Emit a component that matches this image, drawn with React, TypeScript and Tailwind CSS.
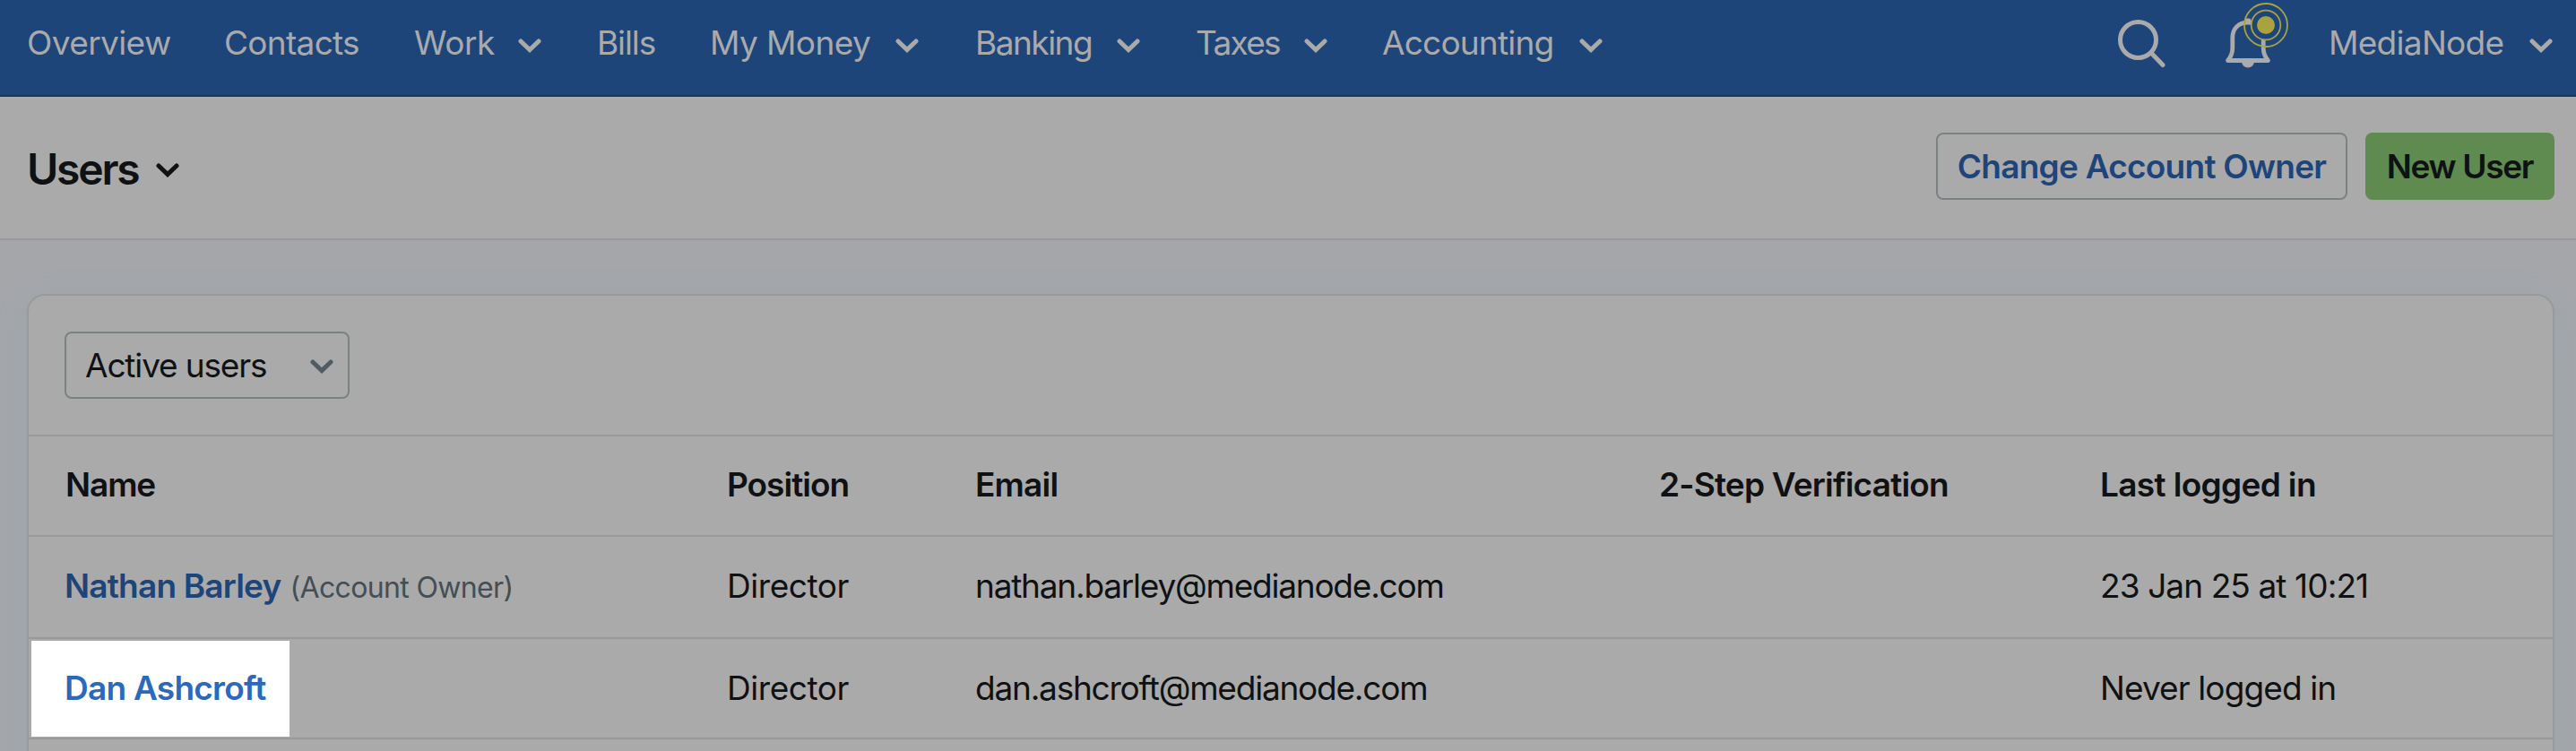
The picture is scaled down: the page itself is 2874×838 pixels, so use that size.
import clsx from "clsx";

const navItems = [
  { label: "Overview", width: "w-[220px]", text: "tracking-[-0.6px]" },
  { label: "Contacts", width: "w-[212px]", text: "tracking-[-0.7px]" },
  { label: "Work", width: "w-[204px]", text: "w-[116px] tracking-[-0.4px]", menu: true },
  { label: "Bills", width: "w-[126px]", text: "tracking-[-1.1px]" },
  { label: "My Money", width: "w-[296px]", text: "w-[207px] tracking-[-0.6px]", menu: true },
  { label: "Banking", width: "w-[246px]", text: "w-[158px] tracking-[-1.5px]", menu: true },
  { label: "Taxes", width: "w-[208px]", text: "w-[121px] tracking-[-1.7px]", menu: true },
  { label: "Accounting", width: "w-[260px]", text: "w-[220px] tracking-[-0.8px]", menu: true },
];

const headings = [
  { label: "Name", style: "pl-[41px] tracking-[-1.1px]" },
  { label: "Position", style: "tracking-[-1px]" },
  { label: "Email", style: "tracking-[-0.8px]" },
  { label: "2-Step Verification", style: "tracking-[-0.8px]" },
  { label: "Last logged in", style: "tracking-[-0.65px]" },
];

const users = [
  {
    name: "Nathan Barley",
    note: "(Account Owner)",
    position: "Director",
    email: "nathan.barley@medianode.com",
    lastLogin: "23 Jan 25 at 10:21",
  },
  {
    name: "Dan Ashcroft",
    position: "Director",
    email: "dan.ashcroft@medianode.com",
    lastLogin: "Never logged in",
    highlighted: true,
  },
];

const columns = "grid grid-cols-[779px_277px_763px_492px_1fr]";

function Chevron({ className }: { className?: string }) {
  return (
    <svg viewBox="0 0 26 16" fill="none" className={clsx("h-4 w-[26px] shrink-0", className)}>
      <path d="M3 3l10 9.500L23 3" stroke="currentColor" strokeWidth="5" strokeLinecap="round" />
    </svg>
  );
}

function SearchIcon() {
  return (
    <svg viewBox="0 0 54 54" fill="none" className="mt-[2px] h-[54px] w-[54px]">
      <circle cx="22.5" cy="22.5" r="20" stroke="currentColor" strokeWidth="5" />
      <path d="M37.500 37.500l12.500 13" stroke="currentColor" strokeWidth="5" strokeLinecap="round" />
    </svg>
  );
}

function BellIcon() {
  return (
    <svg viewBox="0 0 72 74" fill="none" className="-mt-[17px] h-[74px] w-[72px]">
      <path
        d="M2.500 65.500c3.500-4 5.300-8 5.300-14V40c0-10 6.500-16.800 17.200-16.800s17.200 6.800 17.200 16.800v11.500c0 6 1.800 10 5.300 14z"
        stroke="currentColor"
        strokeWidth="4.800"
        strokeLinejoin="round"
      />
      <path d="M18 67h14a7 6.500 0 0 1-14 0z" fill="currentColor" />
      <rect x="21.500" y="18.500" width="7" height="6" rx="2.500" fill="currentColor" />
      <circle cx="45" cy="26" r="16" fill="#1e457a" />
      <g stroke="#aaa23f" strokeWidth="1.800">
        <circle cx="45" cy="26" r="24" />
        <circle cx="45" cy="26" r="16.300" />
      </g>
      <circle cx="45" cy="26" r="10" fill="#aaa23f" />
    </svg>
  );
}

function NavBar() {
  return (
    <nav className="flex h-[108px] items-center border-b-2 border-[#18355f] bg-[#1e457a] pb-[11px] pl-[30px] text-[37px] text-[#aaaaaa]">
      {navItems.map((item) => (
        <div key={item.label} className={clsx("flex items-center", item.width)}>
          <span className={clsx("shrink-0 whitespace-nowrap", item.text)}>{item.label}</span>
          {item.menu && <Chevron className="mt-[6px]" />}
        </div>
      ))}
      <div className="ml-auto flex items-center pr-[26px]">
        <SearchIcon />
        <div className="ml-[66px]">
          <BellIcon />
        </div>
        <span className="ml-[43px] w-[224px] tracking-[-0.7px] whitespace-nowrap">MediaNode</span>
        <Chevron className="mt-[6px]" />
      </div>
    </nav>
  );
}

function PageHeader() {
  return (
    <header className="flex h-[160px] items-center border-b-2 border-[#999a9c] bg-[#aaaaaa] pr-6 pb-[3px] pl-[30px]">
      <h1 className="mt-[6px] w-[144px] text-[48px] font-semibold tracking-[-2.2px] text-[#0f1112]">Users</h1>
      <Chevron className="mt-[9px] text-[#0f1112]" />
      <div className="ml-auto flex gap-5 text-[37px] font-semibold">
        <button className="h-[75px] w-[459px] rounded-lg border-2 border-[#7a8284] tracking-[-0.75px] whitespace-nowrap text-[#1e457a]">
          Change Account Owner
        </button>
        <button className="h-[75px] w-[211px] rounded-lg bg-[#5f8a50] tracking-[-1.3px] whitespace-nowrap text-[#0f1112]">
          New User
        </button>
      </div>
    </header>
  );
}

export default function App() {
  return (
    <div className="h-[838px] overflow-hidden bg-[#a4a6aa] font-['Inter',sans-serif] text-[#0f1112]">
      <NavBar />
      <PageHeader />
      <main className="px-6 pt-[60px] pl-[30px]">
        <section className="h-[600px] rounded-t-[20px] border-2 border-[#999a9f] bg-[#aaaaaa] text-[37px] shadow-[0_14px_36px_rgba(145,170,178,0.4)]">
          <div className="flex h-[157px] items-center border-b-2 border-[#98989e] pl-10">
            <div className="flex h-[75px] w-[318px] items-center justify-between rounded-lg border-2 border-[#7a8284] pr-[16px] pl-[21px]">
              <span className="tracking-[-1.15px] whitespace-nowrap">Active users</span>
              <Chevron className="mt-[3px] w-[24px] text-[#505c63]" />
            </div>
          </div>
          <div className={clsx(columns, "h-[112px] items-center border-b-2 border-[#98989e] pb-[2px] font-semibold")}>
            {headings.map((heading) => (
              <span key={heading.label} className={heading.style}>
                {heading.label}
              </span>
            ))}
          </div>
          {users.map((user) => (
            <div
              key={user.name}
              className={clsx(
                columns,
                "items-center border-b-2 border-[#98989e] whitespace-nowrap",
                user.highlighted ? "h-[112px]" : "h-[114px] pb-[3px]",
              )}
            >
              {user.highlighted ? (
                <div className="mt-[1px] ml-[3px] flex h-[107px] w-[288px] items-center bg-white pb-[2px] pl-[37px]">
                  <a className="font-semibold tracking-[-0.75px] text-[#2c68bc]">{user.name}</a>
                </div>
              ) : (
                <div className="pl-10">
                  <a className="font-semibold tracking-[-0.8px] text-[#1e457a]">{user.name}</a>
                  <span className="ml-[10px] text-[32px] tracking-[-0.65px] text-[#444e54]">{user.note}</span>
                </div>
              )}
              <span className="tracking-[-0.45px]">{user.position}</span>
              <span className="tracking-[-1.22px]">{user.email}</span>
              <span />
              <span className="tracking-[-0.9px]">{user.lastLogin}</span>
            </div>
          ))}
        </section>
      </main>
    </div>
  );
}
